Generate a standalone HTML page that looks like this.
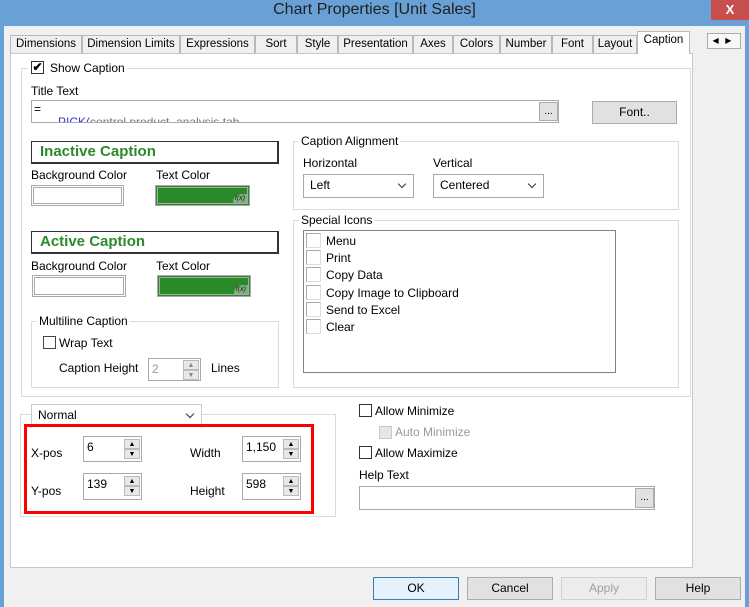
<!DOCTYPE html>
<html><head><meta charset="utf-8"><style>
*{box-sizing:border-box;margin:0;padding:0}
body{width:749px;height:607px;overflow:hidden;background:#f0f0f0;font-family:"Liberation Sans",sans-serif;font-size:12px;color:#000;position:relative}
.a{position:absolute}
.t{position:absolute;white-space:nowrap;line-height:14px}
.title{left:0;top:0;width:749px;height:26px;background:#69a1d6;color:#1f1f1f;font-size:16px;text-align:center;line-height:20px}
.close{left:711px;top:0;width:38px;height:20px;background:#c7504f;color:#fff;font-weight:bold;text-align:center;line-height:19px;font-size:13px}
.bl{top:0;bottom:0;width:4px;background:#69a1d6}
.tab{position:absolute;top:35px;height:18px;border:1px solid #b8b8b8;border-bottom:none;background:#f0f0f0;text-align:center;line-height:16px;font-size:11.5px}
.panel{left:10px;top:53px;width:683px;height:515px;background:#fff;border:1px solid #c8c8c8}
.frame{position:absolute;border:1px solid #dcdcdc}
.lg{position:absolute;background:#fff;padding:0 2px;top:-8px;line-height:14px;white-space:nowrap}
.inp{position:absolute;background:#fff;border:1px solid #a9a9a9}
.cb{position:absolute;width:13px;height:13px;border:1px solid #333;background:#fff}
.cbl{position:absolute;width:15px;height:15px;border:1px solid #aaa;border-right-color:#ddd;border-bottom-color:#ddd;background:#fff}
.btn{position:absolute;background:#e1e1e1;border:1px solid #adadad;text-align:center;line-height:21px}
.dd{position:absolute;background:#fff;border:1px solid #a9a9a9;padding-left:6px;line-height:21px}
.dd:after{content:"";position:absolute;right:8px;top:6px;width:5px;height:5px;border-right:1.5px solid #333;border-bottom:1.5px solid #333;transform:rotate(45deg)}
.cap{position:absolute;border:1px solid #333;border-right-width:2px;border-bottom-width:2px;color:#2a8a2a;font-weight:bold;font-size:15px;padding-left:8px;line-height:20px;background:#fff}
.sw{position:absolute;border:3px double #aaa;background:#fff}
.swg{position:absolute;border:3px double #aaa;background:#2a8a2a}
.swg span{position:absolute;right:0;bottom:0;font-size:7px;font-style:italic;color:#222;background:#7fb07f;border-radius:8px 0 0 0;padding:0 2px;line-height:9px}
.spin{position:absolute;background:#fff;border:1px solid #a9a9a9;padding:3px 0 0 3px}
.spin i{position:absolute;right:1px;width:16px;height:10px;background:#e8e8e8;border:1px solid #bbb;font-style:normal;font-size:7px;text-align:center;line-height:9px}
</style></head><body>
<div class="a title">Chart Properties [Unit Sales]</div>
<div class="a close">X</div>
<div class="a bl" style="left:0;top:26px"></div>
<div class="a bl" style="right:0;top:26px"></div>

<div class="tab" style="left:10px;width:72px">Dimensions</div>
<div class="tab" style="left:82px;width:98px">Dimension Limits</div>
<div class="tab" style="left:180px;width:75px">Expressions</div>
<div class="tab" style="left:255px;width:42px">Sort</div>
<div class="tab" style="left:297px;width:41px">Style</div>
<div class="tab" style="left:338px;width:75px">Presentation</div>
<div class="tab" style="left:413px;width:40px">Axes</div>
<div class="tab" style="left:453px;width:47px">Colors</div>
<div class="tab" style="left:500px;width:52px">Number</div>
<div class="tab" style="left:552px;width:41px">Font</div>
<div class="tab" style="left:593px;width:44px">Layout</div>
<div class="a panel"></div>
<div class="tab" style="left:637px;top:31px;height:23px;width:53px;background:#fff;z-index:2">Caption</div>
<div class="a" style="left:707px;top:33px;width:34px;height:16px;border:1px solid #aaa;background:#f8f8f8;font-size:8px;line-height:14px">&nbsp;&nbsp;◀&nbsp;&nbsp;&nbsp;▶</div>

<div class="frame" style="left:21px;top:68px;width:670px;height:329px">
<div class="lg" style="left:6px;padding-left:22px">Show Caption</div></div>
<div class="cb" style="left:31px;top:61px;font-size:12px;line-height:11px;text-align:center;font-weight:bold">✔</div>
<div class="t" style="left:31px;top:84px">Title Text</div>
<div class="inp" style="left:31px;top:100px;width:528px;height:23px;overflow:hidden"><div class="t" style="left:2px;top:1px">=</div><div class="t" style="left:26px;top:14px;color:#3333cc">PICK(<span style="color:#777">control product_analysis tab</span></div></div>
<div class="btn" style="left:539px;top:102px;width:19px;height:19px;line-height:17px;font-size:10px">...</div>
<div class="btn" style="left:592px;top:101px;width:85px;height:23px">Font..</div>

<div class="cap" style="left:31px;top:141px;width:248px;height:23px">Inactive Caption</div>
<div class="t" style="left:31px;top:168px">Background Color</div>
<div class="t" style="left:156px;top:168px">Text Color</div>
<div class="sw" style="left:31px;top:185px;width:93px;height:21px"></div>
<div class="swg" style="left:155px;top:185px;width:95px;height:21px"><span>f(x)</span></div>

<div class="cap" style="left:31px;top:231px;width:248px;height:23px">Active Caption</div>
<div class="t" style="left:31px;top:259px">Background Color</div>
<div class="t" style="left:156px;top:259px">Text Color</div>
<div class="sw" style="left:32px;top:275px;width:94px;height:22px"></div>
<div class="swg" style="left:157px;top:275px;width:94px;height:22px"><span>f(x)</span></div>

<div class="frame" style="left:31px;top:321px;width:248px;height:67px"><div class="lg" style="left:5px">Multiline Caption</div></div>
<div class="cb" style="left:43px;top:336px;border-color:#444"></div>
<div class="t" style="left:59px;top:336px">Wrap Text</div>
<div class="t" style="left:59px;top:361px">Caption Height</div>
<div class="spin" style="left:148px;top:358px;width:53px;height:23px;color:#999">2<i style="top:1px;color:#888">▲</i><i style="top:11px;color:#888">▼</i></div>
<div class="t" style="left:211px;top:361px">Lines</div>

<div class="frame" style="left:293px;top:141px;width:386px;height:69px"><div class="lg" style="left:5px">Caption Alignment</div></div>
<div class="t" style="left:303px;top:156px">Horizontal</div>
<div class="t" style="left:433px;top:156px">Vertical</div>
<div class="dd" style="left:303px;top:174px;width:111px;height:24px">Left</div>
<div class="dd" style="left:433px;top:174px;width:111px;height:24px">Centered</div>

<div class="frame" style="left:293px;top:220px;width:386px;height:168px"><div class="lg" style="left:5px">Special Icons</div></div>
<div class="inp" style="left:303px;top:230px;width:313px;height:143px;border-color:#828282"></div>
<div class="cbl" style="left:306px;top:233px"></div><div class="t" style="left:326px;top:234px">Menu</div>
<div class="cbl" style="left:306px;top:250px"></div><div class="t" style="left:326px;top:251px">Print</div>
<div class="cbl" style="left:306px;top:267px"></div><div class="t" style="left:326px;top:268px">Copy Data</div>
<div class="cbl" style="left:306px;top:285px"></div><div class="t" style="left:326px;top:286px">Copy Image to Clipboard</div>
<div class="cbl" style="left:306px;top:302px"></div><div class="t" style="left:326px;top:303px">Send to Excel</div>
<div class="cbl" style="left:306px;top:319px"></div><div class="t" style="left:326px;top:320px">Clear</div>

<div class="frame" style="left:20px;top:414px;width:316px;height:103px"></div>
<div class="dd" style="left:31px;top:404px;width:171px;height:24px;border-color:#ccc;border-bottom:none">Normal</div>
<div class="a" style="left:24px;top:424px;width:290px;height:90px;border:3px solid #f00"></div>
<div class="t" style="left:31px;top:446px">X-pos</div>
<div class="t" style="left:190px;top:446px">Width</div>
<div class="t" style="left:31px;top:484px">Y-pos</div>
<div class="t" style="left:190px;top:484px">Height</div>
<div class="spin" style="left:83px;top:436px;width:59px;height:26px">6<i style="top:2px">▲</i><i style="top:12px">▼</i></div>
<div class="spin" style="left:242px;top:436px;width:59px;height:26px">1,150<i style="top:2px">▲</i><i style="top:12px">▼</i></div>
<div class="spin" style="left:83px;top:473px;width:59px;height:27px">139<i style="top:2px">▲</i><i style="top:12px">▼</i></div>
<div class="spin" style="left:242px;top:473px;width:59px;height:27px">598<i style="top:2px">▲</i><i style="top:12px">▼</i></div>

<div class="cb" style="left:359px;top:404px"></div><div class="t" style="left:375px;top:404px">Allow Minimize</div>
<div class="cb" style="left:379px;top:426px;background:#e6e6e6;border-color:#c8c8c8"></div><div class="t" style="left:395px;top:425px;color:#999">Auto Minimize</div>
<div class="cb" style="left:359px;top:446px"></div><div class="t" style="left:375px;top:446px">Allow Maximize</div>
<div class="t" style="left:359px;top:468px">Help Text</div>
<div class="inp" style="left:359px;top:486px;width:296px;height:24px"></div>
<div class="btn" style="left:635px;top:488px;width:19px;height:20px;line-height:17px;font-size:10px">...</div>

<div class="btn" style="left:373px;top:577px;width:86px;height:23px;border:1px solid #3c7fb1;background:#e5f1fb">OK</div>
<div class="btn" style="left:467px;top:577px;width:86px;height:23px">Cancel</div>
<div class="btn" style="left:561px;top:577px;width:86px;height:23px;color:#a0a0a0;background:#ececec;border-color:#d0d0d0">Apply</div>
<div class="btn" style="left:655px;top:577px;width:86px;height:23px">Help</div>
</body></html>
